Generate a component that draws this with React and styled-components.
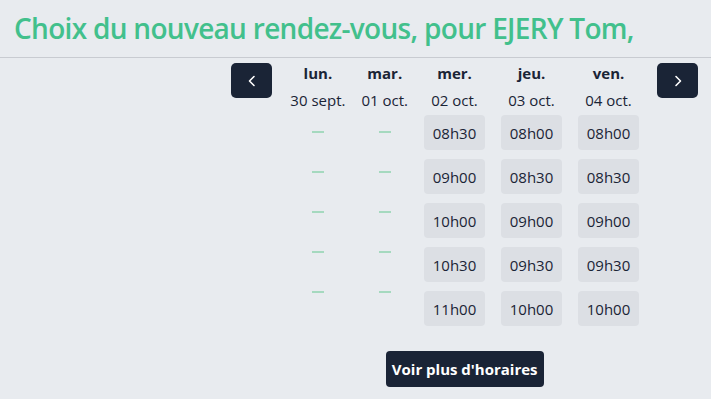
import React from 'react';
import styled, { createGlobalStyle } from 'styled-components';

const GlobalStyle = createGlobalStyle`
  html, body {
    margin: 0;
    padding: 0;
    background: #e8ebef;
  }
  body {
    font-family: 'Open Sans', 'Noto Sans', sans-serif;
    color: #1a2436;
  }
`;

const Page = styled.div`
  width: 711px;
  min-height: 399px;
  background: #e8ebef;
`;

const Header = styled.header`
  height: 57px;
  display: flex;
  align-items: center;
  padding: 0 14px;
  border-bottom: 1px solid #c8cbd1;
  box-sizing: content-box;
`;

const Title = styled.h1`
  margin: 0 0 2px;
  font-size: 28px;
  font-weight: 600;
  color: #42c08c;
  letter-spacing: -0.7px;
`;

const Main = styled.main`
  display: flex;
  justify-content: flex-end;
  padding: 2px 13px 0 0;
`;

const Calendar = styled.div`
  display: flex;
  flex-direction: column;
  align-items: center;
`;

const Week = styled.div`
  display: flex;
  align-items: flex-start;
  gap: 16px;
`;

const NavButton = styled.button`
  width: 41px;
  height: 35px;
  margin-top: 3px;
  border: 0;
  border-radius: 5px;
  background: #1a2436;
  color: #fff;
  display: flex;
  align-items: center;
  justify-content: center;
  padding: 0;
  margin-${(p) => (p.$side === 'left' ? 'right' : 'left')}: 2px;
`;

const Day = styled.div`
  display: flex;
  flex-direction: column;
  align-items: center;
`;

const DayName = styled.div`
  font-size: 15px;
  font-weight: 700;
  line-height: 27px;
`;

const DayDate = styled.div`
  font-size: 15px;
  line-height: 27px;
  white-space: nowrap;
`;

const Slots = styled.div`
  display: flex;
  flex-direction: column;
  gap: 9px;
  margin-top: 1px;
`;

const Slot = styled.button`
  width: 61px;
  height: 35px;
  border: 0;
  border-radius: 4px;
  background: #dcdfe4;
  color: #1a2436;
  font-family: inherit;
  font-size: 15px;
  padding: 0;
`;

const Empty = styled.div`
  display: flex;
  flex-direction: column;
`;

const Dash = styled.div`
  height: 40px;
  display: flex;
  justify-content: center;
  align-items: flex-start;
  &::before {
    content: '';
    width: 12px;
    height: 2px;
    margin-top: 17px;
    background: #a5d9bf;
  }
`;

const MoreButton = styled.button`
  margin-top: 25px;
  height: 36px;
  padding: 0 6px;
  border: 0;
  border-radius: 4px;
  background: #1a2436;
  color: #fff;
  font-family: inherit;
  font-size: 15px;
  font-weight: 700;
`;

const Chevron = ({ dir }) => (
  <svg width="10" height="12" viewBox="0 0 10 12" fill="none">
    <path
      d={dir === 'left' ? 'M7 1.5 L2.5 6 L7 10.5' : 'M3 1.5 L7.5 6 L3 10.5'}
      stroke="#fff"
      strokeWidth="1.6"
      strokeLinecap="round"
      strokeLinejoin="round"
    />
  </svg>
);

const days = [
  { name: 'lun.', date: '30 sept.', slots: [] },
  { name: 'mar.', date: '01 oct.', slots: [] },
  { name: 'mer.', date: '02 oct.', slots: ['08h30', '09h00', '10h00', '10h30', '11h00'] },
  { name: 'jeu.', date: '03 oct.', slots: ['08h00', '08h30', '09h00', '09h30', '10h00'] },
  { name: 'ven.', date: '04 oct.', slots: ['08h00', '08h30', '09h00', '09h30', '10h00'] },
];

const App = () => (
  <Page>
    <GlobalStyle />
    <Header>
      <Title>Choix du nouveau rendez-vous, pour EJERY Tom,</Title>
    </Header>
    <Main>
      <Calendar>
        <Week>
          <NavButton $side='left'>
            <Chevron dir='left' />
          </NavButton>
          {days.map((day) => (
            <Day key={day.date}>
              <DayName>{day.name}</DayName>
              <DayDate>{day.date}</DayDate>
              {day.slots.length ? (
                <Slots>
                  {day.slots.map((s) => (
                    <Slot key={s}>{s}</Slot>
                  ))}
                </Slots>
              ) : (
                <Empty>
                  {[0, 1, 2, 3, 4].map((i) => (
                    <Dash key={i} />
                  ))}
                </Empty>
              )}
            </Day>
          ))}
          <NavButton $side='right'>
            <Chevron dir='right' />
          </NavButton>
        </Week>
        <MoreButton>Voir plus d'horaires</MoreButton>
      </Calendar>
    </Main>
  </Page>
);

export default App;
